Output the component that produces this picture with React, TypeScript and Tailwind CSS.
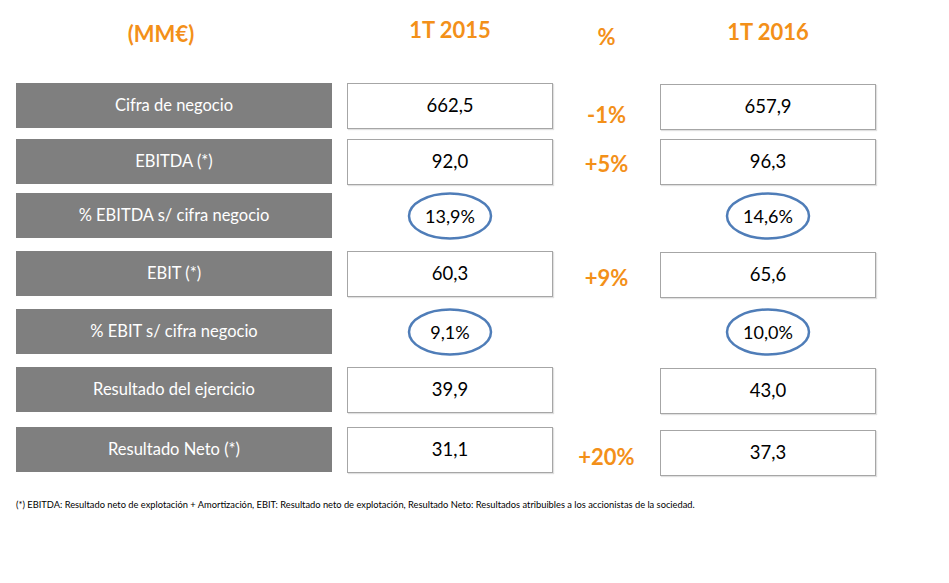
import React from "react";

type Row = {
  label: string;
  a: string;
  b: string;
  pct?: string;
  pctShift?: string;
  oval?: boolean;
  mt: string;
  bShift?: string;
};

const rows: Row[] = [
  { label: "Cifra de negocio", a: "662,5", b: "657,9", pct: "-1%", pctShift: "pt-[21px]", mt: "mt-[26px]", bShift: "mt-[1px]" },
  { label: "EBITDA (*)", a: "92,0", b: "96,3", pct: "+5%", pctShift: "pt-[14px]", mt: "mt-[11px]" },
  { label: "% EBITDA s/ cifra negocio", a: "13,9%", b: "14,6%", oval: true, mt: "mt-[9px]" },
  { label: "EBIT (*)", a: "60,3", b: "65,6", pct: "+9%", pctShift: "pt-[16px]", mt: "mt-[13px]", bShift: "mt-[1px]" },
  { label: "% EBIT s/ cifra negocio", a: "9,1%", b: "10,0%", oval: true, mt: "mt-[13px]" },
  { label: "Resultado del ejercicio", a: "39,9", b: "43,0", mt: "mt-[13px]", bShift: "mt-[1px]" },
  { label: "Resultado Neto (*)", a: "31,1", b: "37,3", pct: "+20%", pctShift: "pt-[19px]", mt: "mt-[15px]", bShift: "mt-[3px]" },
];

const Oval = ({ value }: { value: string }) => (
  <div className="relative flex items-center justify-center w-[86px] h-[48px] -mt-[1px]">
    <svg className="absolute inset-0" width="86" height="48" viewBox="0 0 86 48">
      <ellipse cx="43" cy="24" rx="41" ry="22.5" fill="none" stroke="#4f7db8" strokeWidth="2.5" />
    </svg>
    <span className="relative text-[18px] text-black">{value}</span>
  </div>
);

const ValueBox = ({ value, wide, shift }: { value: string; wide?: boolean; shift?: string }) => (
  <div
    className={`flex items-center justify-center h-[46px] bg-white border border-[#a6a6a6] shadow-[1px_1px_1px_rgba(0,0,0,0.12)] text-[18.5px] text-black ${
      wide ? "w-[216px]" : "w-[206px]"
    } ${shift ?? ""}`}
  >
    {value}
  </div>
);

export default function App() {
  return (
    <div className="w-[949px] h-[583px] bg-white font-['Lato',sans-serif] overflow-hidden">
      {/* Header */}
      <div className="flex pt-[19px] h-[57px] text-[#f39019] font-bold text-[22px] leading-none">
        <div className="w-[332px] pl-[16px] flex justify-center pr-[26px] pt-[4px]">(MM€)</div>
        <div className="w-[221px] pl-[15px] flex justify-center">1T 2015</div>
        <div className="w-[107px] flex justify-center pt-[7px]">%</div>
        <div className="w-[216px] flex justify-center pt-[2px]">1T 2016</div>
      </div>

      {/* Rows */}
      <div className="flex flex-col">
        {rows.map((r) => (
          <div key={r.label} className={`flex items-start h-[45px] ${r.mt}`}>
            <div className="ml-[16px] w-[316px] h-[45px] shrink-0 bg-[#7f7f7f] flex items-center justify-center text-white text-[16.5px]">
              {r.label}
            </div>
            <div className="ml-[15px] w-[206px] shrink-0 flex justify-center">
              {r.oval ? <Oval value={r.a} /> : <ValueBox value={r.a} />}
            </div>
            <div
              className={`w-[107px] shrink-0 flex justify-center text-[#f39019] font-bold text-[22px] leading-none ${
                r.pctShift ?? ""
              }`}
            >
              {r.pct ?? ""}
            </div>
            <div className="w-[216px] shrink-0 flex justify-center">
              {r.oval ? <Oval value={r.b} /> : <ValueBox value={r.b} wide shift={r.bShift} />}
            </div>
          </div>
        ))}
      </div>

      {/* Footnote */}
      <p className="mt-[28px] ml-[16px] text-[9.3px] leading-none text-black">
        (*) EBITDA: Resultado neto de explotación + Amortización, EBIT: Resultado neto de explotación, Resultado Neto:
        Resultados atribuibles a los accionistas de la sociedad.
      </p>
    </div>
  );
}
